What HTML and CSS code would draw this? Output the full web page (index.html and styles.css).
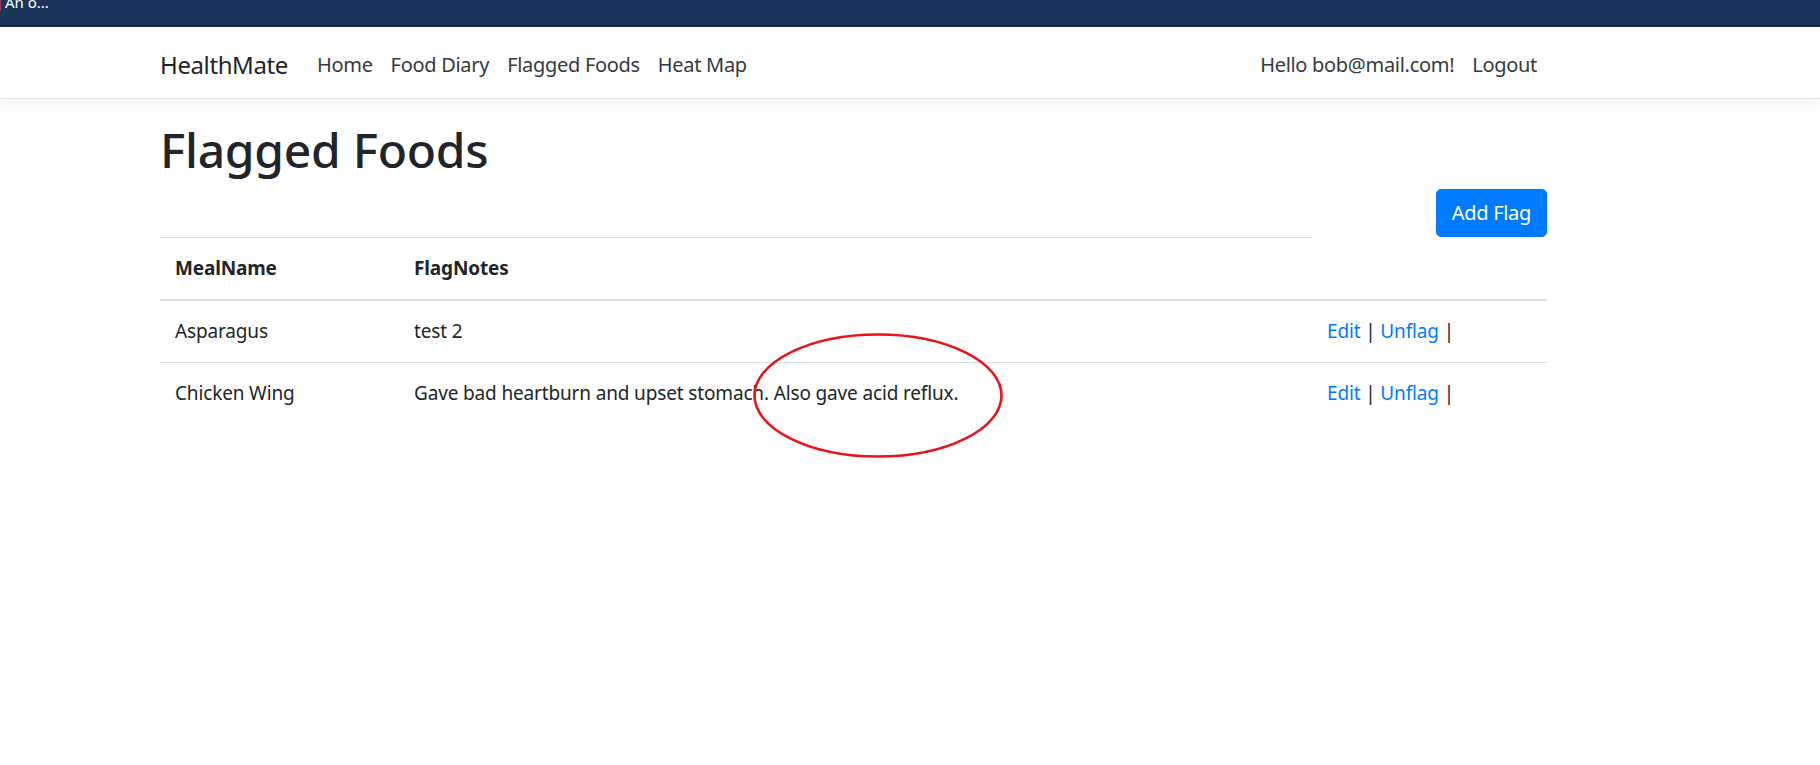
FILE: index.html
```html
<!DOCTYPE html>
<html lang="en">
<head>
<meta charset="utf-8">
<title>Flagged Foods - HealthMate</title>
<link rel="stylesheet" href="styles.css">
</head>
<body>
<div class="topbar"><span class="topbar-mark"></span><span class="topbar-text">An o...</span></div>
<header class="navbar">
  <div class="container nav-inner">
    <a class="brand" href="#">HealthMate</a>
    <nav class="nav-left">
      <a class="nav-link" href="#">Home</a>
      <a class="nav-link" href="#">Food Diary</a>
      <a class="nav-link" href="#">Flagged Foods</a>
      <a class="nav-link" href="#">Heat Map</a>
    </nav>
    <nav class="nav-right">
      <a class="nav-link" href="#">Hello bob@mail.com!</a>
      <a class="nav-link" href="#">Logout</a>
    </nav>
  </div>
</header>
<main class="container main">
  <h1 class="title">Flagged Foods</h1>
  <div class="actions"><a class="btn" href="#">Add Flag</a></div>
  <table class="table">
    <colgroup><col class="c1"><col class="c2"><col class="c3"></colgroup>
    <thead>
      <tr><th>MealName</th><th>FlagNotes</th><th class="th-empty"></th></tr>
    </thead>
    <tbody>
      <tr><td>Asparagus</td><td>test 2</td><td><a href="#">Edit</a> | <a href="#">Unflag</a> |</td></tr>
      <tr><td>Chicken Wing</td><td>Gave bad heartburn and upset stomach. Also gave acid reflux.</td><td><a href="#">Edit</a> | <a href="#">Unflag</a> |</td></tr>
    </tbody>
  </table>
</main>
<svg class="annotation" width="252" height="127" viewBox="0 0 252 127" aria-hidden="true">
  <ellipse cx="126" cy="63.5" rx="123.5" ry="61" fill="none" stroke="#e8141c" stroke-width="2.6"/>
</svg>
</body>
</html>
```

FILE: styles.css
```css
* { box-sizing: border-box; }
body {
  margin: 0;
  font-family: "Noto Sans", "Open Sans", sans-serif;
  font-size: 20px;
  line-height: 1.5;
  color: #212529;
  background: #fff;
}
a { text-decoration: none; }

.topbar {
  height: 27px;
  background: #1b355a;
  border-bottom: 2px solid #13294a;
  display: flex;
  align-items: flex-start;
  overflow: hidden;
}
.topbar-mark {
  width: 1px;
  height: 11px;
  background: #9a3a5a;
}
.topbar-text {
  color: #fff;
  font-size: 15px;
  line-height: 1;
  margin-top: -5px;
  padding-left: 4px;
}

.navbar {
  height: 72px;
  background: #fff;
  border-bottom: 1px solid #dee2e6;
  box-shadow: 0 5px 15px rgba(0, 0, 0, 0.05);
  margin-bottom: 22px;
}
.container {
  width: 1387px;
  margin-left: 160px;
}
.nav-inner {
  height: 100%;
  display: flex;
  align-items: center;
  padding-top: 4px;
}
.brand {
  font-size: 24px;
  color: #212529;
  margin-right: 20px;
  letter-spacing: -0.4px;
}
.nav-left, .nav-right { display: flex; }
.nav-right { margin-left: auto; }
.nav-link {
  padding: 10px 9px;
  font-size: 20px;
  color: #343a40;
  letter-spacing: -0.3px;
}
.nav-right .nav-link:last-child { padding-right: 10px; }

.title {
  margin: 0 0 10px;
  font-size: 48px;
  font-weight: 500;
  line-height: 1.2;
  letter-spacing: -0.3px;
}
.actions {
  display: flex;
  justify-content: flex-end;
}
.btn {
  display: inline-block;
  background: #007bff;
  color: #fff;
  border: 1px solid #007bff;
  border-radius: 5px;
  padding: 8px 15px;
  font-size: 20px;
  line-height: 30px;
  letter-spacing: -0.3px;
}

.table {
  width: 100%;
  border-collapse: collapse;
  table-layout: fixed;
  font-size: 19px;
  letter-spacing: -0.15px;
}
.c1 { width: 239px; }
.c3 { width: 235px; }
.table th, .table td {
  padding: 15px;
  text-align: left;
  vertical-align: top;
  border-top: 1px solid #dee2e6;
  line-height: 31px;
}
.table th {
  font-weight: 700;
  border-bottom: 2px solid #dee2e6;
}
.table th.th-empty { border-top: none; }
.table td a { color: #007bff; }

.annotation {
  position: absolute;
  left: 752px;
  top: 332px;
}
```
